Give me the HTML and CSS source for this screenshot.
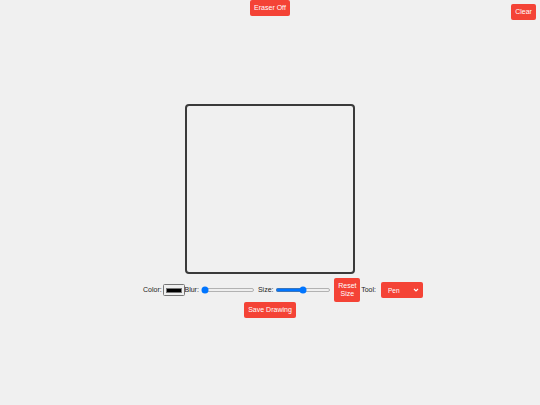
FILE: index.html
```html
<!DOCTYPE html>
<html lang="en">
<head>
<meta charset="utf-8">
<title>Drawing</title>
<link rel="stylesheet" href="styles.css">
</head>
<body>
  <button class="btn btn-eraser">Eraser Off</button>
  <main class="app">
    <canvas class="board" width="166" height="166"></canvas>
    <div class="controls">
      <label class="lbl">Color:</label>
      <input class="color" type="color" value="#000000">
      <label class="lbl">Blur:</label>
      <input class="range range-blur" type="range" min="0" max="20" value="0">
      <label class="lbl lbl-size">Size:</label>
      <input class="range range-size" type="range" min="1" max="50" value="25">
      <button class="btn btn-reset">Reset<br>Size</button>
      <label class="lbl lbl-tool">Tool:</label>
      <span class="select-wrap">
        <select class="tool">
          <option>Pen</option>
          <option>Brush</option>
        </select>
        <svg class="chev" width="6" height="4" viewBox="0 0 6 4"><path d="M1 1 L3 3 L5 1" fill="none" stroke="#fff" stroke-width="1.1"/></svg>
      </span>
    </div>
    <button class="btn btn-save">Save Drawing</button>
  </main>
  <button class="btn btn-clear">Clear</button>
</body>
</html>
```
FILE: styles.css
```css
html, body {
  margin: 0;
  padding: 0;
}
body {
  background: #f0f0f0;
  font-family: "Liberation Sans", Arial, sans-serif;
  font-size: 7px;
  color: #222;
  height: 405px;
  display: flex;
  flex-direction: column;
  align-items: center;
}
.btn {
  background: #f44336;
  color: #fff;
  border: none;
  border-radius: 2px;
  font-family: "Liberation Sans", Arial, sans-serif;
  font-size: 7px;
  line-height: 8px;
  padding: 4px 4px;
  margin: 0;
  cursor: pointer;
}
.btn-eraser {
  width: 40px;
}
.btn-clear {
  position: fixed;
  top: 4px;
  right: 4px;
  width: 25px;
}
.app {
  margin-top: 88px;
  display: flex;
  flex-direction: column;
  align-items: center;
}
.board {
  width: 166px;
  height: 166px;
  border: 2px solid #3a3a3a;
  border-radius: 4px;
  background: #f0f0f0;
}
.controls {
  margin-top: 4px;
  width: 280px;
  margin-left: 26px;
  display: flex;
  align-items: center;
  height: 24px;
}
.lbl {
  white-space: nowrap;
  line-height: 8px;
}
.color {
  zoom: 0.5;
  width: 44px;
  height: 24px;
  margin: 0 0 0 2px;
  padding: 1px 2px;
}
.range {
  zoom: 0.5;
  width: 108px;
  margin: 0;
}
.range-blur {
  margin-left: 4px;
}
.lbl-size {
  margin-left: 3px;
}
.range-size {
  margin-left: 4px;
  width: 112px;
}
.btn-reset {
  width: 26px;
  height: 24px;
  margin-left: 3px;
  padding: 4px 0;
}
.lbl-tool {
  margin-left: 1px;
}
.select-wrap {
  position: relative;
  margin-left: 5px;
  display: inline-flex;
}
.tool {
  appearance: none;
  -webkit-appearance: none;
  background: #f44336;
  color: #fff;
  border: none;
  border-radius: 2px;
  font-family: "Liberation Sans", Arial, sans-serif;
  font-size: 6.5px;
  width: 42px;
  height: 16px;
  padding: 0 0 0 7px;
  margin: 0;
}
.chev {
  position: absolute;
  right: 4px;
  top: 6px;
  pointer-events: none;
}
.btn-save {
  width: 52px;
  height: 16px;
}
```
